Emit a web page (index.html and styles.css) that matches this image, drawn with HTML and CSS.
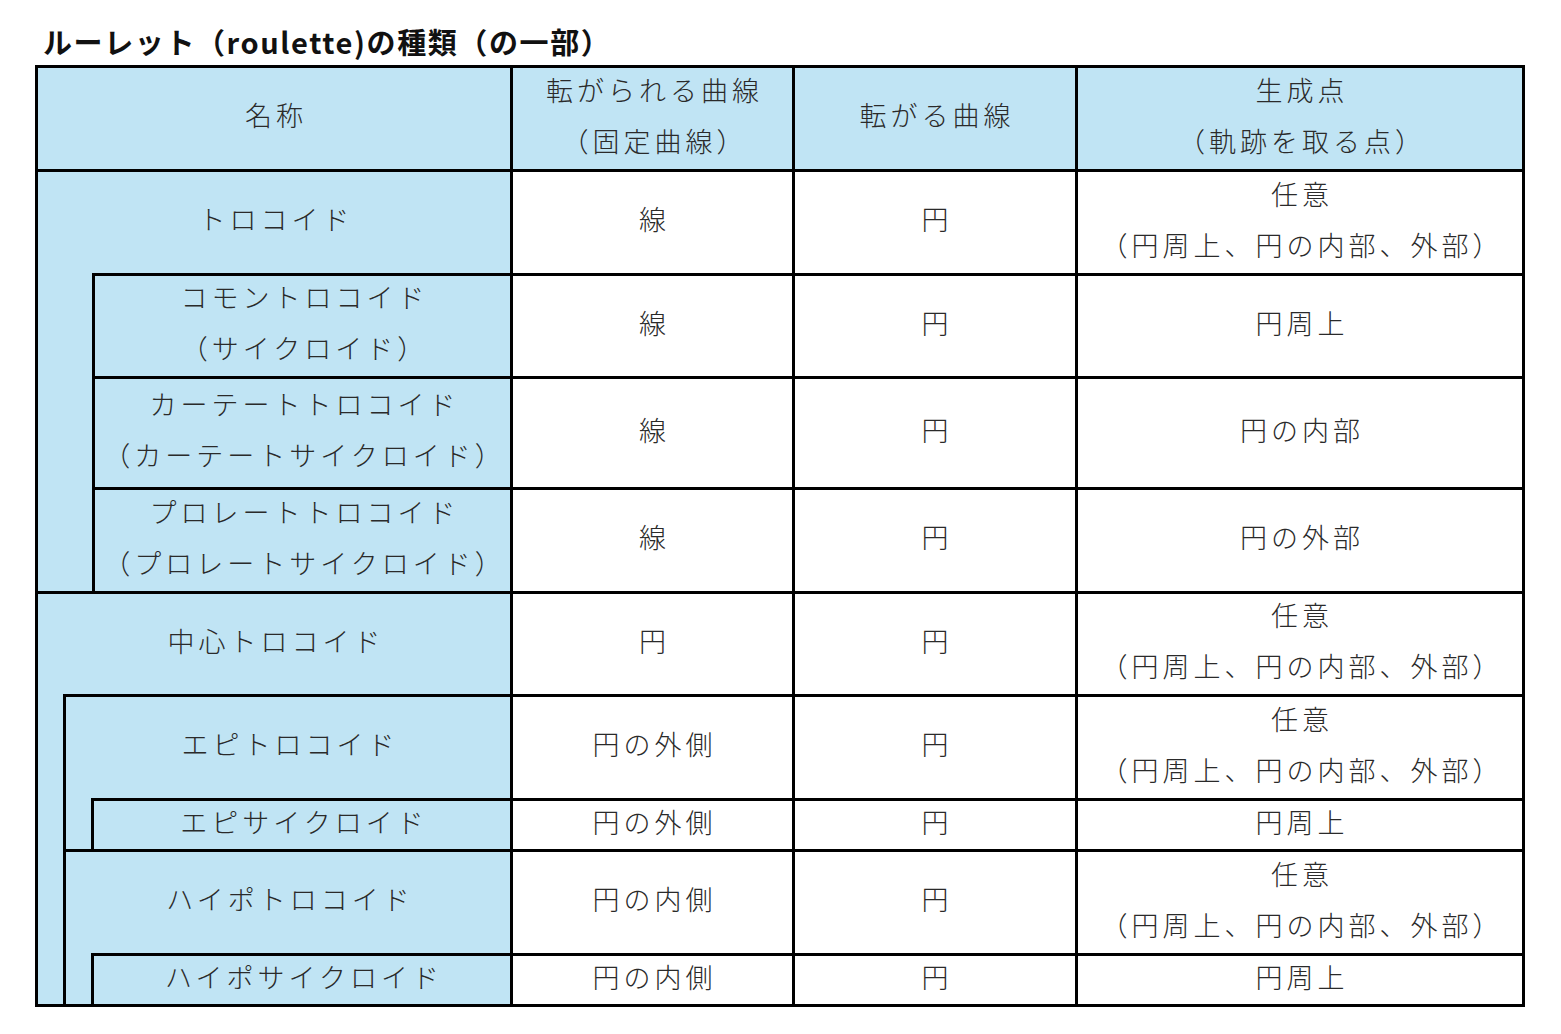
FILE: index.html
```html
<!DOCTYPE html>
<html lang="ja">
<head>
<meta charset="utf-8">
<title>ルーレットの種類</title>
<link rel="stylesheet" href="styles.css">
</head>
<body>
<h1 class="title">ルーレット（roulette)の種類（の一部）</h1>
<div class="table">
  <div class="cell head">名称</div>
  <div class="cell head">転がられる曲線<br>（固定曲線）</div>
  <div class="cell head">転がる曲線</div>
  <div class="cell head">生成点<br>（軌跡を取る点）</div>

  <div class="group group-a">
    <div class="node top h1">トロコイド</div>
    <div class="sub deep">
      <div class="node h2">コモントロコイド<br>（サイクロイド）</div>
      <div class="node h3">カーテートトロコイド<br>（カーテートサイクロイド）</div>
      <div class="node h4">プロレートトロコイド<br>（プロレートサイクロイド）</div>
    </div>
  </div>
  <div class="cell">線</div>
  <div class="cell">円</div>
  <div class="cell">任意<br>（円周上、円の内部、外部）</div>
  <div class="cell">線</div>
  <div class="cell">円</div>
  <div class="cell">円周上</div>
  <div class="cell">線</div>
  <div class="cell">円</div>
  <div class="cell">円の内部</div>
  <div class="cell">線</div>
  <div class="cell">円</div>
  <div class="cell">円の外部</div>

  <div class="group group-b">
    <div class="node top h5">中心トロコイド</div>
    <div class="sub">
      <div class="node h6">エピトロコイド</div>
      <div class="sub">
        <div class="node h7">エピサイクロイド</div>
      </div>
      <div class="node h8">ハイポトロコイド</div>
      <div class="sub">
        <div class="node h9">ハイポサイクロイド</div>
      </div>
    </div>
  </div>
  <div class="cell">円</div>
  <div class="cell">円</div>
  <div class="cell">任意<br>（円周上、円の内部、外部）</div>
  <div class="cell">円の外側</div>
  <div class="cell">円</div>
  <div class="cell">任意<br>（円周上、円の内部、外部）</div>
  <div class="cell">円の外側</div>
  <div class="cell">円</div>
  <div class="cell">円周上</div>
  <div class="cell">円の内側</div>
  <div class="cell">円</div>
  <div class="cell">任意<br>（円周上、円の内部、外部）</div>
  <div class="cell">円の内側</div>
  <div class="cell">円</div>
  <div class="cell">円周上</div>
</div>
</body>
</html>
```

FILE: styles.css
```css
:root {
  --line: 3px solid #000;
  --blue: #c0e4f4;
  --r0: 104px;
  --r1: 104px;
  --r2: 103px;
  --r3: 111px;
  --r4: 104px;
  --r5: 103px;
  --r6: 104px;
  --r7: 51px;
  --r8: 104px;
  --r9: 51px;
}

* {
  box-sizing: border-box;
}

html, body {
  margin: 0;
  padding: 0;
  background: #fff;
}

body {
  padding: 21px 0 0 35px;
  font-family: "Noto Sans CJK JP", "Noto Sans", sans-serif;
}

.title {
  margin: 0 0 4px 8px;
  font-size: 29px;
  line-height: 40px;
  font-weight: 700;
  letter-spacing: 1.6px;
  color: #111;
}

.table {
  display: grid;
  width: max-content;
  grid-template-columns: 475px 282px 283px 447px;
  grid-template-rows: var(--r0) var(--r1) var(--r2) var(--r3) var(--r4) var(--r5) var(--r6) var(--r7) var(--r8) var(--r9);
  border-top: var(--line);
  border-left: var(--line);
  font-size: 27px;
  font-weight: 300;
  line-height: 51px;
  letter-spacing: 4px;
  color: #2a2a2a;
}

.cell {
  border-right: var(--line);
  border-bottom: var(--line);
  display: flex;
  flex-direction: column;
  justify-content: center;
  align-items: center;
  text-align: center;
  padding-left: 4px;
  padding-bottom: 8px;
  background: #fff;
}

.head {
  background: var(--blue);
}

.group {
  grid-column: 1;
  background: var(--blue);
  border-right: var(--line);
  border-bottom: var(--line);
  display: flex;
  flex-direction: column;
}

.group-a {
  grid-row: 2 / span 4;
}

.group-b {
  grid-row: 6 / span 5;
}

.sub {
  margin-left: 25px;
  border-left: var(--line);
}

.sub.deep {
  margin-left: 54px;
}

.node {
  border-top: var(--line);
  display: flex;
  flex-direction: column;
  justify-content: center;
  align-items: center;
  text-align: center;
  padding-left: 4px;
  padding-bottom: 8px;
}

.node.top {
  border-top: none;
}

.h1 { height: calc(var(--r1) - 3px); }
.h2 { height: var(--r2); }
.h3 { height: var(--r3); }
.h4 { height: var(--r4); }
.h5 { height: calc(var(--r5) - 3px); }
.h6 { height: var(--r6); }
.h7 { height: var(--r7); }
.h8 { height: var(--r8); }
.h9 { height: var(--r9); }
```
